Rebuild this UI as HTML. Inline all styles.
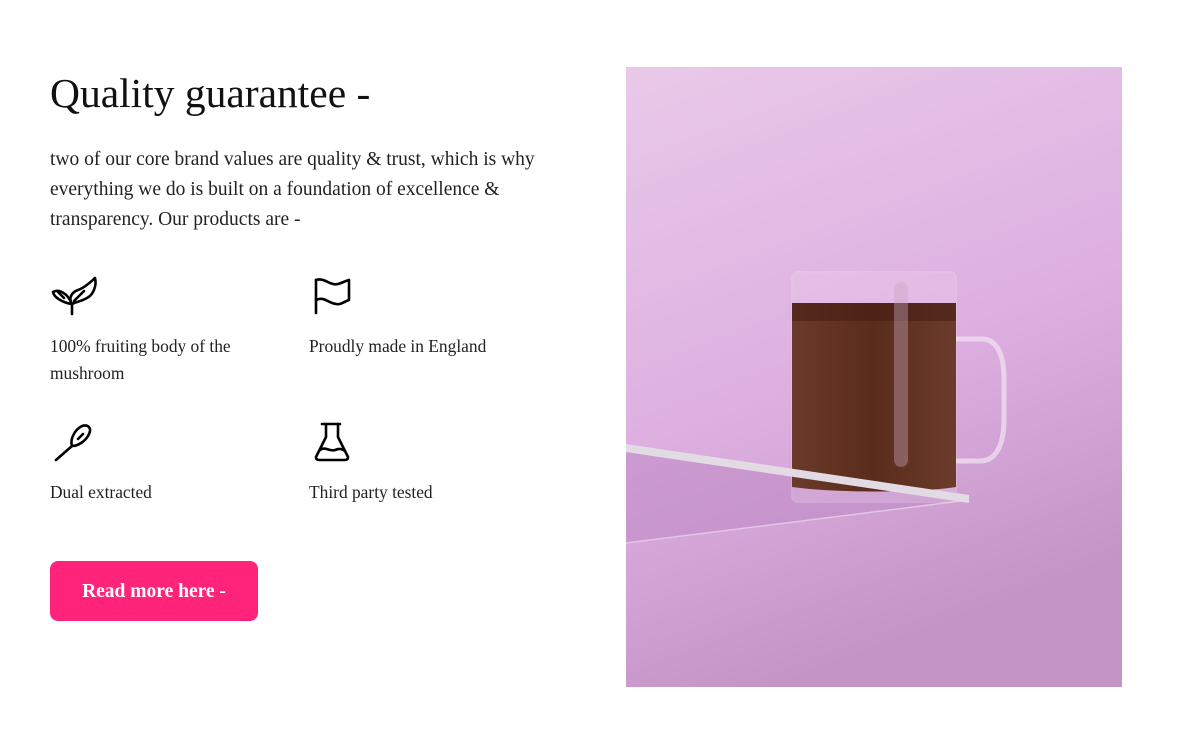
<!DOCTYPE html>
<html><head><style>
body{margin:0;background:#fff;width:1179px;height:738px;position:relative;overflow:hidden;font-family:"Liberation Serif",serif;color:#111}
h1{position:absolute;left:50px;top:68px;margin:0;font-weight:400;font-size:41.5px;line-height:50px}
.p{position:absolute;left:50px;top:145px;width:520px;font-size:19.5px;line-height:30px;color:#222}
.it{position:absolute;font-size:17.4px;line-height:27px;width:230px;color:#222}
.btn{position:absolute;left:50px;top:561px;width:208px;height:60px;background:#ff2379;border-radius:8px;color:#fff;font-weight:700;font-size:19.5px;line-height:62px;text-align:center}
</style></head><body>
<h1>Quality guarantee -</h1>
<div class="p">two of our core brand values are quality &amp; trust, which is why everything we do is built on a foundation of excellence &amp; transparency. Our products are -</div>

<svg style="position:absolute;left:50px;top:276px" width="48" height="40" viewBox="0 0 48 40" fill="none" stroke="#000" stroke-width="2.6" stroke-linejoin="round" stroke-linecap="round">
<path d="M22 38V28"/><path d="M22 28C14 27 4 22 3 16c5-3 14 0 19 12z"/><path d="M22 28c-4-6 0-12 6-14s14-9 17-12c2 8-2 17-8 20-5 3-11 4-15 6zM24 25l10-10"/><path d="M8 16l6 6"/></svg>
<div class="it" style="left:50px;top:333px">100% fruiting body of the mushroom</div>

<svg style="position:absolute;left:313px;top:276px" width="40" height="40" viewBox="0 0 40 40" fill="none" stroke="#000" stroke-width="2.6" stroke-linecap="round" stroke-linejoin="round">
<path d="M3 37V4"/><path d="M3 4c8-3 14 6 22 4 4-1 7-3 11-4v20c-6 2-8 5-13 4-8-1-12-8-20-4"/></svg>
<div class="it" style="left:309px;top:333px">Proudly made in England</div>

<svg style="position:absolute;left:54px;top:423px" width="40" height="40" viewBox="0 0 40 40" fill="none" stroke="#000" stroke-width="2.6" stroke-linecap="round" stroke-linejoin="round">
<path d="M2 37l16-14"/><path d="M18 23c-2-6 2-16 10-20 6-2 10 2 7 8-3 7-11 12-17 12z"/><path d="M24 16l5-5"/></svg>
<div class="it" style="left:50px;top:479px">Dual extracted</div>

<svg style="position:absolute;left:314px;top:422px" width="40" height="40" viewBox="0 0 40 40" fill="none" stroke="#000" stroke-width="2.6" stroke-linecap="round" stroke-linejoin="round">
<path d="M8 2h18"/><path d="M12 2v13L2 35c0 2 1 3 3 3h26c2 0 3-1 3-3L24 15V2"/><path d="M6 28c5-4 10 2 15 0s7-1 10 1"/></svg>
<div class="it" style="left:309px;top:479px">Third party tested</div>

<div class="btn">Read more here -</div>

<svg style="position:absolute;left:626px;top:67px" width="496" height="620" viewBox="0 0 496 620">
<defs>
<linearGradient id="bg" x1="0" y1="0" x2="0.3" y2="1"><stop offset="0" stop-color="#e9c9e9"/><stop offset="0.6" stop-color="#dcaee0"/><stop offset="1" stop-color="#c594c7"/></linearGradient>
<linearGradient id="liq" x1="0" y1="0" x2="1" y2="0"><stop offset="0" stop-color="#6a3a2a"/><stop offset="0.5" stop-color="#5a2c1c"/><stop offset="1" stop-color="#6b3c2c"/></linearGradient>
</defs>
<rect width="496" height="620" fill="url(#bg)"/>
<path d="M0 385L343 433L0 476z" fill="#c08cc6" opacity="0.6"/>
<path d="M0 476L343 433" stroke="#e3c6e6" stroke-width="1.5"/>
<rect x="166" y="205" width="164" height="230" rx="6" fill="#f0d8ef" opacity="0.25" stroke="#f4e4f4" stroke-width="2"/>
<path d="M166 236h164v184c-40 6-120 6-164 0z" fill="url(#liq)"/>
<path d="M166 236h164v18h-164z" fill="#3e1a10" opacity="0.5"/>
<rect x="268" y="215" width="14" height="185" rx="7" fill="#c9a6bf" opacity="0.4"/>
<path d="M330 272h26c14 0 22 14 22 40v40c0 26-8 42-24 42h-24" fill="none" stroke="#f3e3f2" stroke-width="5" opacity="0.7"/>
<path d="M0 377L343 428L343 436L0 385z" fill="#e2dbe4"/>
</svg>
</body></html>
